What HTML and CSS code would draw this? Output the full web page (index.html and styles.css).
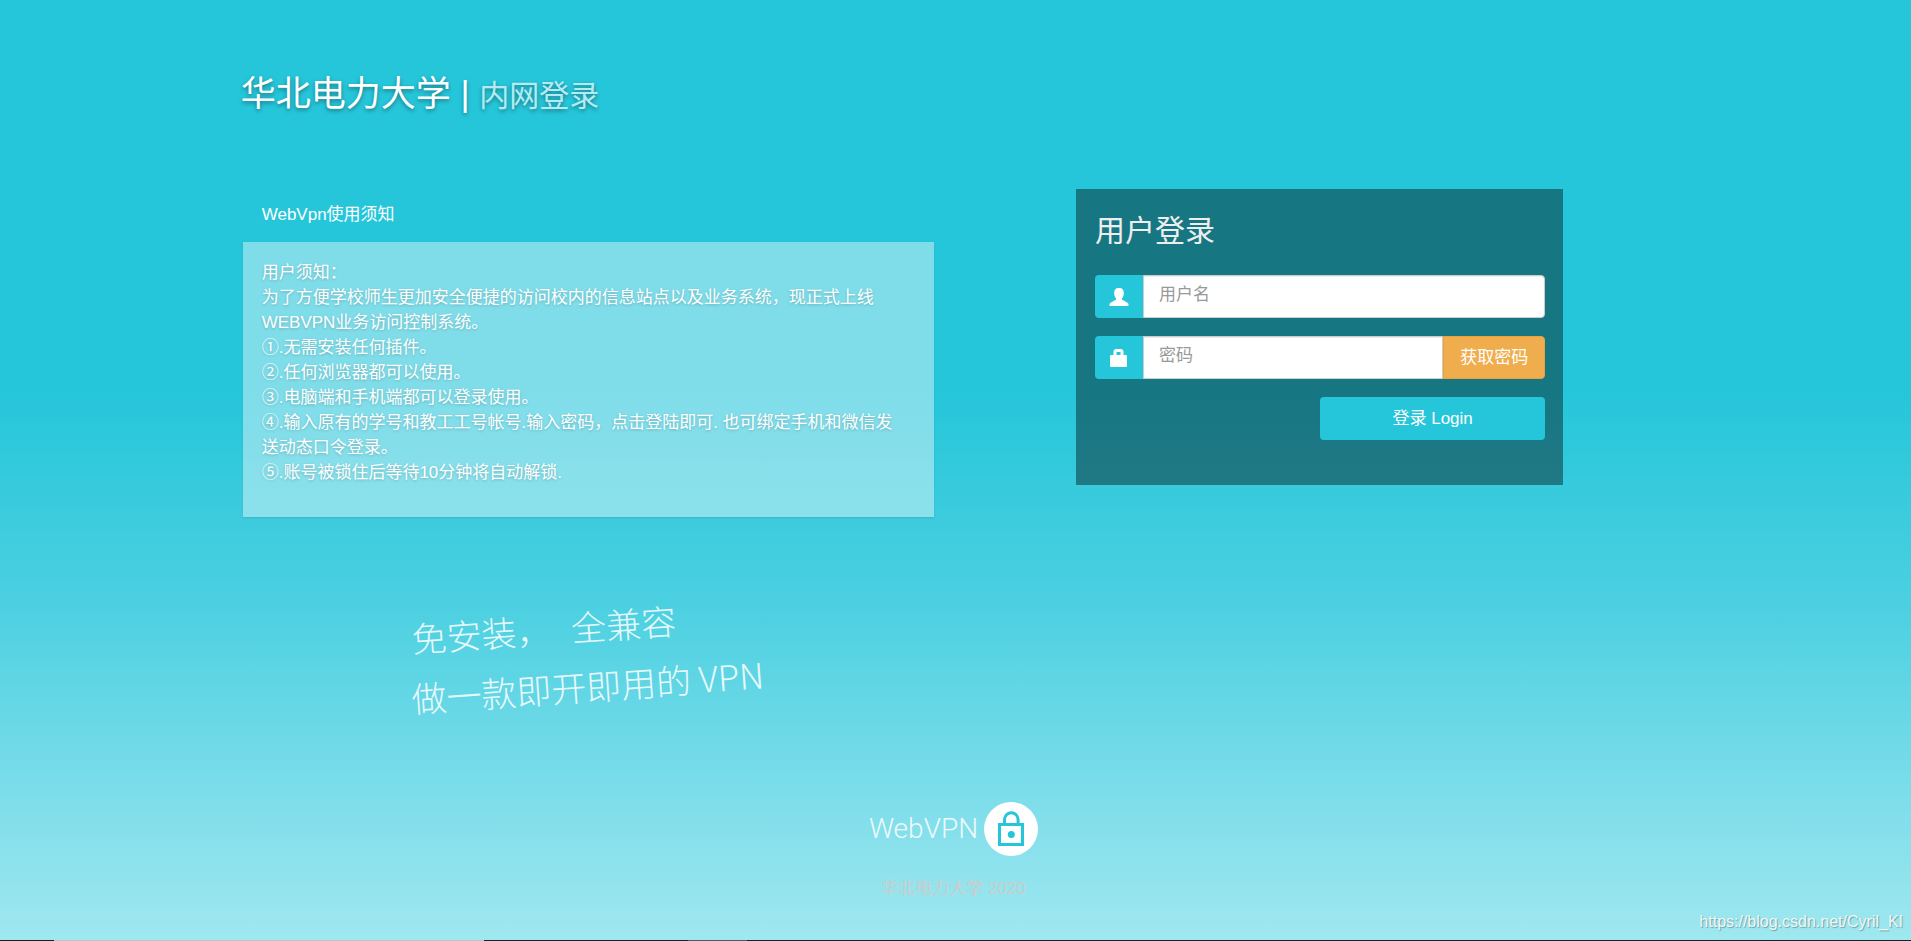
FILE: index.html
```html
<!DOCTYPE html>
<html lang="zh-CN">
<head>
<meta charset="utf-8">
<title>华北电力大学 | 内网登录</title>
<link rel="stylesheet" href="styles.css">
</head>
<body>
<div class="page">
  <header class="brand">
    <h1 class="brand-title">华北电力大学 | <small class="brand-sub">内网登录</small></h1>
  </header>
  <main class="columns">
    <section class="notice">
      <h2 class="notice-title">WebVpn使用须知</h2>
      <div class="notice-body">
        <p>用户须知：</p>
        <p>为了方便学校师生更加安全便捷的访问校内的信息站点以及业务系统，现正式上线WEBVPN业务访问控制系统。</p>
        <p>①.无需安装任何插件。</p>
        <p>②.任何浏览器都可以使用。</p>
        <p>③.电脑端和手机端都可以登录使用。</p>
        <p>④.输入原有的学号和教工工号帐号.输入密码，点击登陆即可. 也可绑定手机和微信发送动态口令登录。</p>
        <p>⑤.账号被锁住后等待10分钟将自动解锁.</p>
      </div>
      <div class="slogan">
        <p class="slogan-line"><span>免安装，</span><span>全兼容</span></p>
        <p class="slogan-line">做一款即开即用的 VPN</p>
      </div>
    </section>
    <form class="login">
      <h2 class="login-title">用户登录</h2>
      <div class="field">
        <label class="field-icon" for="user" aria-label="用户名">
          <svg width="20" height="20" viewBox="0 0 20 20" fill="#fff"><path d="M10 1C6.500 1 5.200 3 5.200 6c0 2.300.700 4.300 2 5.400v1.200L2 15.600Q.500 16.300.500 17.500V19h19v-1.500q0-1.200-1.500-1.900l-5.200-3v-1.200C14.100 10.300 14.800 8.300 14.800 6 14.800 3 13.500 1 10 1z"/></svg>
        </label>
        <input class="field-input" id="user" type="text" placeholder="用户名">
      </div>
      <div class="field">
        <label class="field-icon" for="pass" aria-label="密码">
          <svg width="20" height="20" viewBox="0 0 20 20" fill="#fff"><path fill-rule="evenodd" d="M4.500 7V4Q4.500 1 7.500 1h4q3 0 3 3v3H17q1 0 1 1v10q0 1-1 1H2q-1 0-1-1V8q0-1 1-1zM7.500 7h4V4h-4z"/></svg>
        </label>
        <input class="field-input" id="pass" type="password" placeholder="密码">
        <button class="get-code" type="button">获取密码</button>
      </div>
      <button class="submit" type="submit">登录 Login</button>
    </form>
  </main>
  <footer class="footer">
    <div class="logo">
      <span class="logo-text">WebVPN</span>
      <svg width="54" height="54" viewBox="0 0 54 54" fill="none"><circle cx="27" cy="27" r="27" fill="#fff"/><path d="M15.500 22.500h23v20h-23zM20.500 22V17.500a6.800 6.800 0 0 1 13.600 0V22" stroke="#26c6da" stroke-width="3"/><circle cx="27.300" cy="32.500" r="3.500" fill="#26c6da"/></svg>
    </div>
    <p class="copyright">华北电力大学 2020</p>
  </footer>
  <div class="source">https://blog.csdn.net/Cyril_KI</div>
  <div class="strip"></div>
</div>
</body>
</html>
```
FILE: styles.css
```css
* { box-sizing: border-box; }
body {
  margin: 0;
  font: 17px/25px "Liberation Sans", "Noto Sans CJK SC", sans-serif;
  color: #fff;
}
h1, h2, p { margin: 0; font-weight: 400; }
.page {
  position: relative;
  display: flex;
  flex-direction: column;
  min-height: 100vh;
  background: linear-gradient(#26c6da 0, #26c6da 42%, #4bd0e1 64%, #80deea 86%, #9fe8f0 100%);
}
.brand { padding: 68px 0 0 12.6%; }
.brand-title {
  font-size: 35px;
  line-height: 52px;
  text-shadow: 0 2px 4px rgba(0, 0, 0, 0.4);
}
.brand-sub { font-size: 30px; color: #b2ebf2; }
.columns {
  display: grid;
  grid-template-columns: 691fr 487fr;
  column-gap: 142px;
  align-items: start;
  width: 69.1%;
  margin: 67px 0 0 12.7%;
}
.notice-title {
  padding: 13px 19px 15px;
  font-size: 17px;
  line-height: 25px;
}
.notice-body {
  padding: 18px 32px 32px 19px;
  background: rgba(255, 255, 255, 0.41);
  box-shadow: 0 1px 2px rgba(0, 0, 0, 0.1);
  text-shadow: 0 1px 3px rgba(0, 0, 0, 0.2);
}
.slogan {
  padding: 78px 0 0 168px;
  font-family: "Noto Sans CJK SC", sans-serif;
  font-weight: 300;
  font-size: 35px;
  line-height: 60px;
}
.slogan-line {
  display: flex;
  gap: 20px;
  width: 370px;
  white-space: nowrap;
  font-weight: 300;
  transform: rotate(-4deg);
  opacity: 0.85;
}
.login {
  display: flex;
  flex-direction: column;
  gap: 18px;
  padding: 20px 18px 45px 19px;
  background: rgba(0, 0, 0, 0.4);
}
.login-title {
  margin-bottom: 4px;
  font-size: 30px;
  line-height: 44px;
  color: #eee;
}
.field { display: flex; height: 43px; }
.field-icon {
  display: flex;
  align-items: center;
  justify-content: center;
  flex: none;
  width: 48px;
  border-radius: 4px 0 0 4px;
  background: #26c6da;
}
.field-input {
  flex: 1;
  min-width: 0;
  padding: 4px 15px 8px;
  border: 1px solid #ccc;
  border-radius: 0 4px 4px 0;
  background: #fff;
  box-shadow: inset 0 1px 1px rgba(0, 0, 0, 0.08);
  font: inherit;
  color: #555;
}
.field-input::placeholder { color: #999; opacity: 1; }
.field-input:not(:last-child) { border-radius: 0; }
.get-code {
  flex: none;
  width: 102px;
  padding: 0;
  border: 1px solid #eea236;
  border-radius: 0 4px 4px 0;
  background: #f0ad4e;
  font: inherit;
  color: #fff;
}
.submit {
  align-self: flex-end;
  width: 50%;
  height: 43px;
  border: 0;
  border-radius: 4px;
  background: #26c6da;
  font: inherit;
  color: #fff;
}
.footer {
  display: flex;
  flex-direction: column;
  align-items: center;
  gap: 20px;
  margin-top: auto;
  padding: 0 4px 40px 0;
}
.logo { display: flex; align-items: center; gap: 6px; }
.logo svg { display: block; }
.logo-text {
  font: 300 28px/54px Roboto, sans-serif;
  opacity: 0.85;
}
.copyright { color: #ccc; }
.source {
  position: absolute;
  right: 8px;
  bottom: 7px;
  font-size: 16px;
  color: #f2f6f7;
  text-shadow: 1px 1px 1px rgba(0, 0, 0, 0.3);
}
.strip {
  position: absolute;
  inset: auto 0 0 0;
  height: 1px;
  background: linear-gradient(90deg, #1b2210 54px, #bcc4c8 54px 484px, #16232c 484px 688px, #4d5a63 688px 747px, #16232c 747px);
}
```
